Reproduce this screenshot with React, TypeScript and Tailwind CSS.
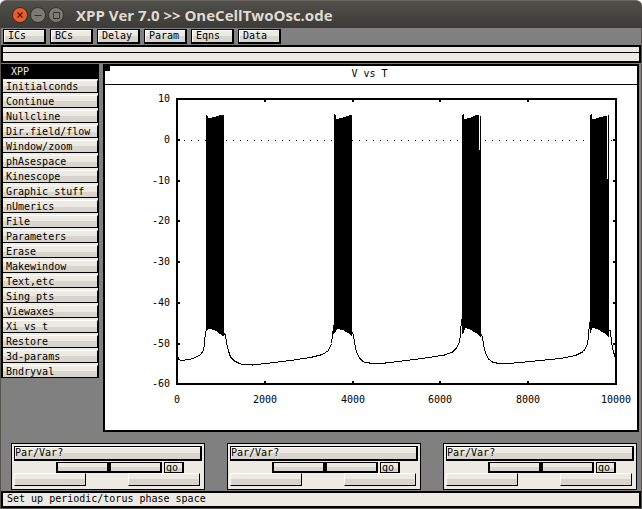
import { useState } from "react";

const TOP_BUTTONS = ["ICs", "BCs", "Delay", "Param", "Eqns", "Data"];

const MENU = [
  "Initialconds",
  "Continue",
  "Nullcline",
  "Dir.field/flow",
  "Window/zoom",
  "phAsespace",
  "Kinescope",
  "Graphic stuff",
  "nUmerics",
  "File",
  "Parameters",
  "Erase",
  "Makewindow",
  "Text,etc",
  "Sing pts",
  "Viewaxes",
  "Xi vs t",
  "Restore",
  "3d-params",
  "Bndryval",
];

const X_TICKS = [0, 2000, 4000, 6000, 8000, 10000];
const Y_TICKS = [10, 0, -10, -20, -30, -40, -50, -60];

const px = (t: number) => Math.round(177 + t * 0.0439);
const py = (v: number) => Math.round(140 - v * 4.07);

const faceCls = "bg-linear-to-b from-[#edeae3] from-50% to-[#d8d5ce] to-50%";
const raisedCls = "border border-r-2 border-b-2 border-black shadow-[inset_1px_1px_0_white]";
const plateCls = "h-[13px] w-[72px] border border-t-white border-r-black border-b-black border-l-white";

function TitleBar() {
  return (
    <header className="flex h-7 items-center rounded-t-md border-t border-[#6b6962] bg-linear-to-b from-[#504f49] to-[#3c3b37] pl-3">
      <div className="flex gap-0.5">
        <button type="button" aria-label="Close" className="h-4 w-4">
          <svg viewBox="0 0 16 16" className="block h-4 w-4">
            <circle cx="8" cy="8" r="7.5" fill="#ee5a2a" stroke="#33322e" />
            <path d="M5.5 5.5l5 5M10.5 5.5l-5 5" stroke="#3c2018" strokeWidth="1.3" />
          </svg>
        </button>
        <button type="button" aria-label="Minimize" className="h-4 w-4">
          <svg viewBox="0 0 16 16" className="block h-4 w-4">
            <circle cx="8" cy="8" r="7.5" fill="#7b7a73" stroke="#33322e" />
            <path d="M4.5 8.5h7" stroke="#33322e" />
          </svg>
        </button>
        <button type="button" aria-label="Maximize" className="h-4 w-4">
          <svg viewBox="0 0 16 16" className="block h-4 w-4">
            <circle cx="8" cy="8" r="7.5" fill="#7b7a73" stroke="#33322e" />
            <path d="M5.5 5.5h6v6h-6z" fill="none" stroke="#33322e" />
          </svg>
        </button>
      </div>
      <h1 className="ml-3 font-['Open_Sans','Noto_Sans',sans-serif] text-[15px] leading-4 font-bold whitespace-nowrap text-[#dfdbd2]">
        XPP Ver 7.0 &gt;&gt; OneCellTwoOsc.ode
      </h1>
    </header>
  );
}

function Plot() {
  return (
    <svg viewBox="105 85 532 345" className="block w-full" role="img" aria-label="V vs T" shapeRendering="crispEdges">
      <path d="M176 98h441v287h-441zM178 100v283h437v-283z" fillRule="evenodd" />
      {X_TICKS.map((t) => (
        <g key={t}>
          <path d={`M${px(t) - 1} 98h2v4h-2zM${px(t) - 1} 381h2v4h-2z`} />
          <text x={px(t)} y="403" fontSize="10" textAnchor="middle">{t}</text>
        </g>
      ))}
      {Y_TICKS.map((v) => (
        <g key={v}>
          <path d={`M176 ${py(v) - 1}h4v2h-4zM613 ${py(v) - 1}h4v2h-4z`} />
          <text x="170" y={py(v) + 3} fontSize="10" textAnchor="end">{v}</text>
        </g>
      ))}
      <path d="M184 140.5H613" stroke="black" strokeDasharray="1 6" />

      {/* spike bursts */}
      <path d="M206 115h1v1h1v2h4v-1h4v-1h3v-1h5V336h-1l-3-2l-4-3l-5-2h-3l-1 2h-1z" />
      <path d="M334 114h1v1h1v4h3v-1h4v-1h3v-1h3v-1h3V336h-1l-3-3l-5-3l-6-1l-1 2l-3 3V325h1z" />
      <path d="M462 115h1v-1h1v5h3v-1h4v-1h2v-1h2v-1h4V150h1V116h1V337h-1l-4-4l-5-3l-5-2h-1l-1 4l-2 3z" />
      <path d="M590 115h1v-1h1v5h4v-1h3v-1h4v-1h4V179h1V115h1V337h-1l-4-4l-5-3l-6-2h-1l-1 4l-1 3z" />

      {/* slow voltage trace between the bursts */}
      <g fill="none" stroke="black">
        <path d="M177.5 356l1 3l2 1.5l9-1l6-2l5-3l3-4l1-7l1-12" />
        <path d="M223.5 333l2 2l1 8l2 8l2 6l4 4l6 3l12 1l13-1.5l25-3l20-3l12-3l6-4l3-7l1-9l1-6" />
        <path d="M351.5 331l2 4l1 8l2 9l3 6l4 4l6 1l16 0l25-3l22-3l12-2l8-3l4-4l3-6l1-8l1-15" />
        <path d="M480.5 333l2 4l1 8l2 8l3 6l4 3l8 2l8-.5l22-2l30-3l15-3l8-4l4-7l1-8l1-14" />
        <path d="M608.5 330l2 1l1 12l2 9l2 6" />
      </g>
    </svg>
  );
}

function ParSlider({ id }: { id: number }) {
  const [value, setValue] = useState(50);
  return (
    <section className="min-w-0 flex-1 border border-black bg-[#edeae3] px-0.5 pt-0.5 pb-[3px]">
      <button type="button" className={`block h-[15px] w-full text-left leading-3 ${raisedCls} ${faceCls}`}>
        Par/Var?
      </button>
      <div className="mt-px ml-[42px] flex gap-0.5">
        <div className={`h-[11px] w-[106px] border-2 border-t border-black ${faceCls}`}>
          <input
            type="range"
            aria-label={`Par/Var ${id}`}
            value={value}
            onChange={(e) => setValue(Number(e.target.value))}
            className="block h-2 w-full appearance-none bg-transparent [&::-webkit-slider-thumb]:h-2 [&::-webkit-slider-thumb]:w-1 [&::-webkit-slider-thumb]:appearance-none [&::-webkit-slider-thumb]:bg-black"
          />
        </div>
        <button type="button" className={`h-[11px] w-5 border border-r-2 border-black pl-px text-left leading-2 ${faceCls}`}>
          go
        </button>
      </div>
      <div className="flex justify-between pr-0.5">
        <button type="button" aria-label="Decrease" className={`${plateCls} ${faceCls}`} />
        <button type="button" aria-label="Increase" className={`${plateCls} ${faceCls}`} />
      </div>
    </section>
  );
}

export default function App() {
  return (
    <div className="bg-white font-['DejaVu_Sans_Mono','Liberation_Mono',monospace] text-[10px] leading-3 text-black">
      <TitleBar />
      <main className="border-x border-b border-[#55544e] bg-[#808080]">
        <div className="flex gap-1 px-0.5 py-px">
          {TOP_BUTTONS.map((label) => (
            <button
              key={label}
              type="button"
              className={`h-[15px] w-[43px] pl-1 text-left leading-3 ${raisedCls} ${faceCls}`}
            >
              {label}
            </button>
          ))}
        </div>

        <div className="h-[18px] border-2 border-black bg-[#edeae3]">
          <div className="h-1.5 border-b border-black" />
        </div>

        <div className="mt-px flex items-start">
          <nav className="w-[98px] shrink-0 border-l-2 border-black bg-black">
            <h2 className="h-[15px] pl-2 leading-4 text-[#edeae3]">XPP</h2>
            <ul className="border-r border-black bg-[#edeae3]">
              {MENU.map((item) => (
                <li key={item} className="py-px last:pb-0">
                  <button
                    type="button"
                    className={`block h-[13px] w-full border-t border-r border-b border-t-white border-r-black border-b-black pl-[3px] text-left leading-[10px] ${faceCls}`}
                  >
                    {item}
                  </button>
                </li>
              ))}
            </ul>
          </nav>

          <section className="mr-0.5 ml-1 min-w-0 flex-1 border-2 border-black bg-white">
            <div className="flex h-[19px] items-start border-b border-black pr-2">
              <span className="h-[5px] w-[5px] bg-black" />
              <h2 className="flex-1 pt-0.5 text-center leading-3">V vs T</h2>
            </div>
            <Plot />
          </section>
        </div>

        <div className="mt-[11px] flex gap-[22px] pr-1 pl-2.5">
          <ParSlider id={1} />
          <ParSlider id={2} />
          <ParSlider id={3} />
        </div>

        <p className="mt-px h-[17px] border-2 border-black bg-[#edeae3] pl-1 leading-3">
          Set up periodic/torus phase space
        </p>
      </main>
    </div>
  );
}
